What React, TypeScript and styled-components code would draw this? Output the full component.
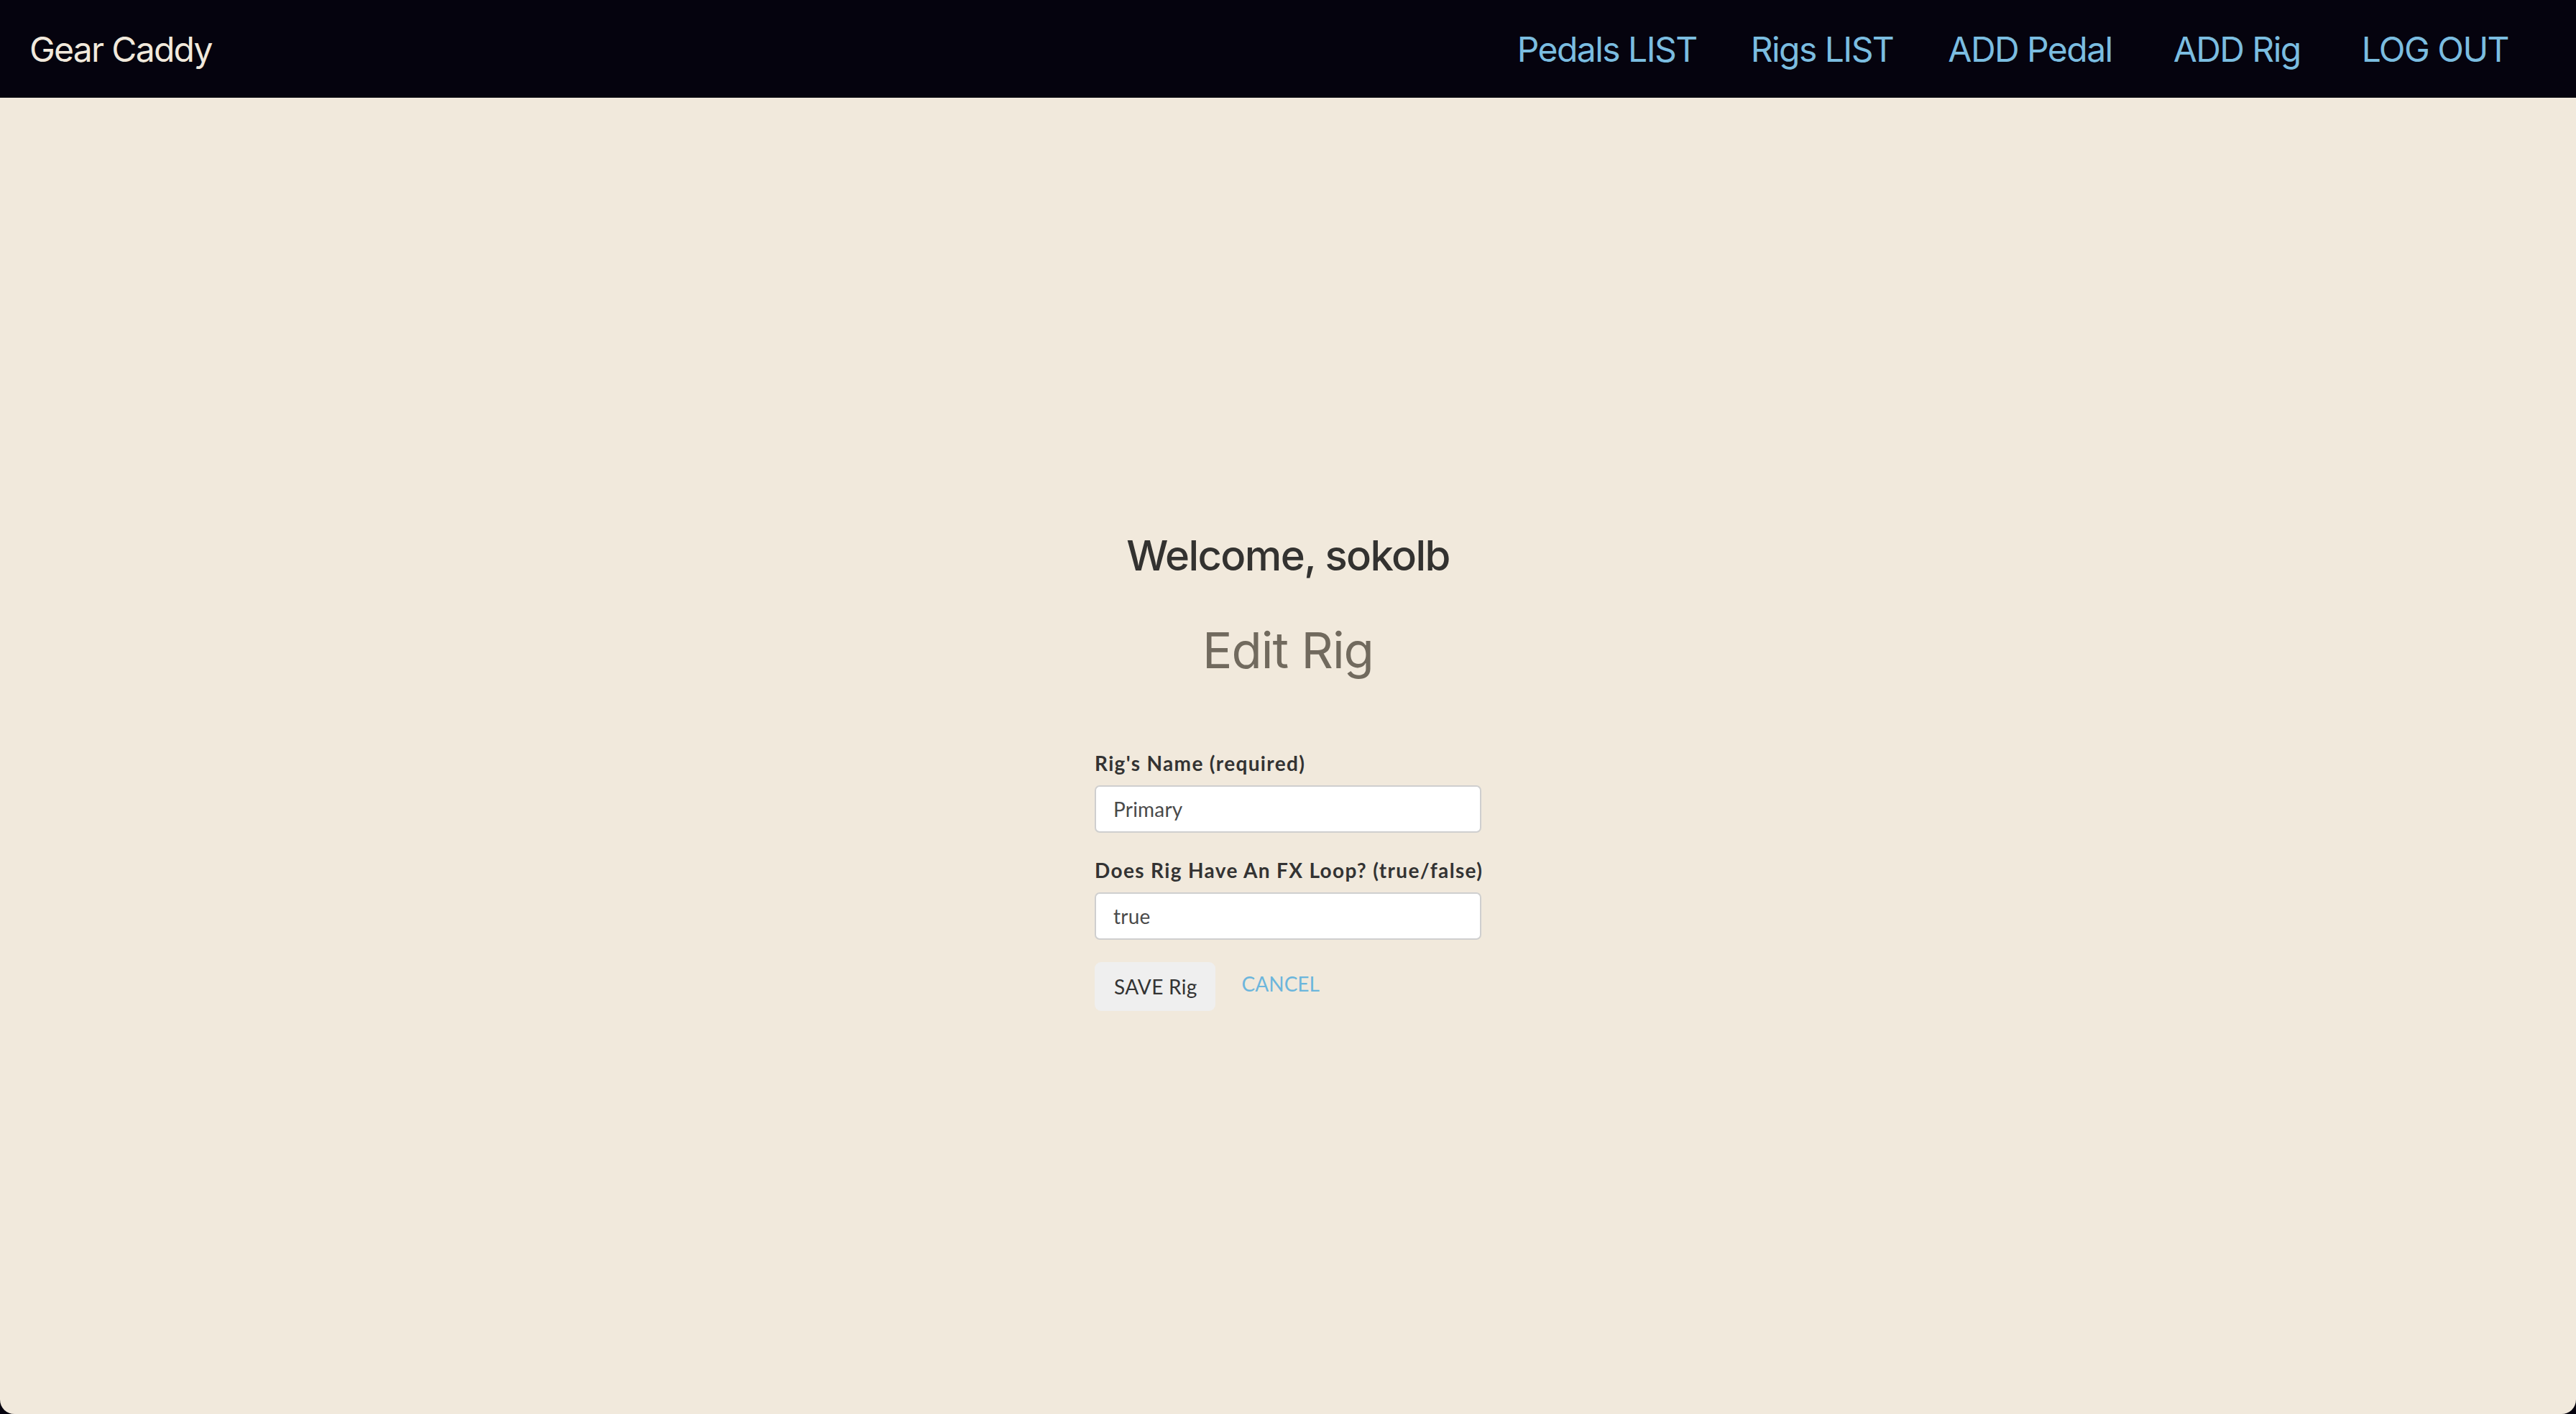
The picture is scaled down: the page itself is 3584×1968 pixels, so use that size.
import React from "react";
import styled, { createGlobalStyle } from "styled-components";

const GlobalStyle = createGlobalStyle`
  html, body {
    margin: 0;
    padding: 0;
    background: #05030e;
  }
  * { box-sizing: border-box; }
`;

const Page = styled.div`
  min-height: 1968px;
  background: #f1e9dc;
  border-bottom-left-radius: 20px;
  border-bottom-right-radius: 20px;
  overflow: hidden;
  display: flex;
  flex-direction: column;
`;

const NavBar = styled.nav`
  height: 136px;
  background: #05030e;
  display: flex;
  align-items: center;
  padding: 0 94px 0 41px;
  font-family: Inter, "Liberation Sans", sans-serif;
  font-size: 48px;
`;

const Brand = styled.a`
  color: #f1e9dc;
  text-decoration: none;
  letter-spacing: -1.7px;
`;

const NavLinks = styled.div`
  margin-left: auto;
  display: flex;
  align-items: center;
`;

const NavLink = styled.a<{ $gap: number }>`
  color: #7bbde0;
  text-decoration: none;
  margin-left: ${(p) => p.$gap}px;
  letter-spacing: -1.55px;
`;

const Main = styled.main`
  display: flex;
  flex-direction: column;
  align-items: center;
  padding-top: 602px;
`;

const Welcome = styled.h2`
  margin: 0;
  font-family: Inter, "Liberation Sans", sans-serif;
  font-size: 58px;
  line-height: 70px;
  font-weight: 500;
  color: #333230;
  letter-spacing: -1.6px;
`;

const Title = styled.h1`
  margin: 55px 0 0;
  font-family: Inter, "Liberation Sans", sans-serif;
  font-size: 69px;
  line-height: 84px;
  font-weight: 400;
  color: #716a5e;
  letter-spacing: -1px;
`;

const Form = styled.form`
  width: 538px;
  margin-top: 98px;
  display: flex;
  flex-direction: column;
  font-family: Lato, "Liberation Sans", sans-serif;
`;

const Field = styled.div<{ $first?: boolean }>`
  display: flex;
  flex-direction: column;
  margin-top: ${(p) => (p.$first ? 0 : 35)}px;
`;

const Label = styled.label`
  font-size: 28px;
  line-height: 34px;
  font-weight: 700;
  color: #333;
  letter-spacing: 1.35px;
  white-space: nowrap;
  margin-bottom: 14px;
`;

const Input = styled.input`
  width: 100%;
  height: 66px;
  padding: 0 24px;
  border: 2px solid #cfcfcf;
  border-radius: 7px;
  background: #fff;
  font-family: Lato, "Liberation Sans", sans-serif;
  font-size: 28px;
  letter-spacing: 0.2px;
  color: #4a4a4a;
  outline: none;
`;

const Actions = styled.div`
  display: flex;
  align-items: center;
  margin-top: 31px;
`;

const SaveButton = styled.button`
  height: 68px;
  padding: 0 25px 0 27px;
  border: none;
  border-radius: 9px;
  background: #efefef;
  font-family: Lato, "Liberation Sans", sans-serif;
  font-size: 28px;
  letter-spacing: 0.3px;
  color: #333;
  cursor: pointer;
`;

const CancelLink = styled.a`
  margin-left: 37px;
  margin-top: -8px;
  font-family: Lato, "Liberation Sans", sans-serif;
  font-size: 28px;
  color: #6cb6dc;
  text-decoration: none;
`;

export default function App() {
  return (
    <>
      <GlobalStyle />
      <Page>
        <NavBar>
          <Brand href="#">Gear Caddy</Brand>
          <NavLinks>
            <NavLink $gap={0} href="#">Pedals LIST</NavLink>
            <NavLink $gap={75} href="#">Rigs LIST</NavLink>
            <NavLink $gap={76} href="#">ADD Pedal</NavLink>
            <NavLink $gap={85} href="#">ADD Rig</NavLink>
            <NavLink $gap={85} href="#">LOG OUT</NavLink>
          </NavLinks>
        </NavBar>
        <Main>
          <Welcome>Welcome, sokolb</Welcome>
          <Title>Edit Rig</Title>
          <Form onSubmit={(e) => e.preventDefault()}>
            <Field $first>
              <Label htmlFor="rig-name">Rig's Name (required)</Label>
              <Input id="rig-name" defaultValue="Primary" />
            </Field>
            <Field>
              <Label htmlFor="rig-fx">Does Rig Have An FX Loop? (true/false)</Label>
              <Input id="rig-fx" defaultValue="true" />
            </Field>
            <Actions>
              <SaveButton type="submit">SAVE Rig</SaveButton>
              <CancelLink href="#">CANCEL</CancelLink>
            </Actions>
          </Form>
        </Main>
      </Page>
    </>
  );
}
